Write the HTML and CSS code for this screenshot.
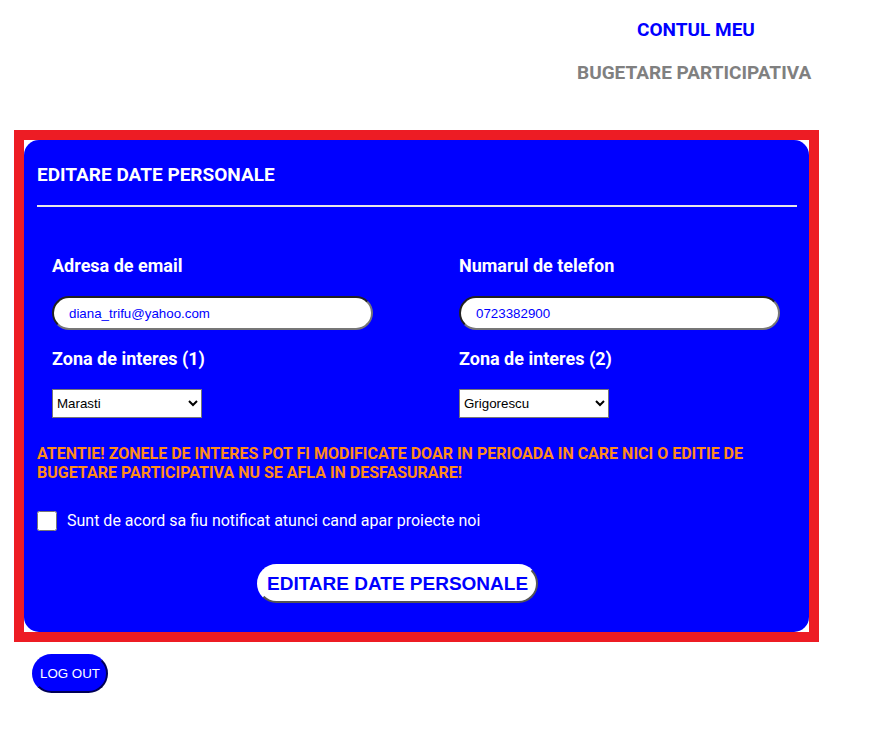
FILE: index.html
```html
<!DOCTYPE html>
<html>
<head>
    <title>Contul meu</title>
    <link rel="stylesheet" href="styles.css">
</head>
<body>
    <ul class="nav">
        <li><a href="#" class="nav-active">CONTUL MEU</a></li>
        <li><a href="#" class="nav-link">BUGETARE PARTICIPATIVA</a></li>
    </ul>

    <div class="frame">
        <div class="panel">
            <h3 class="panel-title">EDITARE DATE PERSONALE</h3>
            <hr class="divider">

            <div class="fields">
                <div class="field">
                    <label for="email">Adresa de email</label>
                    <input type="text" id="email" class="pill" value="diana_trifu@yahoo.com">
                </div>
                <div class="field">
                    <label for="phone">Numarul de telefon</label>
                    <input type="text" id="phone" class="pill" value="0723382900">
                </div>
                <div class="field">
                    <label for="zona1">Zona de interes (1)</label>
                    <select id="zona1" class="zone">
                        <option>Marasti</option>
                        <option>Grigorescu</option>
                        <option>Manastur</option>
                    </select>
                </div>
                <div class="field">
                    <label for="zona2">Zona de interes (2)</label>
                    <select id="zona2" class="zone">
                        <option>Grigorescu</option>
                        <option>Marasti</option>
                        <option>Manastur</option>
                    </select>
                </div>
            </div>

            <p class="warning">ATENTIE! ZONELE DE INTERES POT FI MODIFICATE DOAR IN PERIOADA IN CARE NICI O EDITIE DE BUGETARE PARTICIPATIVA NU SE AFLA IN DESFASURARE!</p>

            <label class="notify">
                <input type="checkbox" class="check">
                <span>Sunt de acord sa fiu notificat atunci cand apar proiecte noi</span>
            </label>

            <button class="save-btn">EDITARE DATE PERSONALE</button>
        </div>
    </div>

    <button class="logout-btn">LOG OUT</button>
</body>
</html>
```

FILE: styles.css
```css
body {
    margin: 0;
    padding: 0;
    background-color: #fff;
    font-family: Roboto, "Liberation Sans", Arial, sans-serif;
}

.nav {
    list-style: none;
    margin: 0 67px 0 auto;
    padding: 19px 0 0 0;
    width: 233px;
    text-align: center;
    white-space: nowrap;
}

.nav li {
    font-size: 19px;
    line-height: 22px;
    margin-bottom: 21px;
}

.nav li:last-child {
    margin-bottom: 0;
}

.nav a {
    font-weight: bold;
    text-decoration: none;
}

.nav-active {
    color: #0000ff;
    padding-left: 5px;
}

.nav-link {
    color: #808080;
}

.frame {
    margin: 46px 0 0 14px;
    width: 785px;
    border: 10px solid #ed1c24;
    background-color: #fff;
}

.panel {
    background-color: #0000ff;
    border-radius: 15px;
    padding: 23px 12px 29px 13px;
    color: #fff;
}

.panel-title {
    margin: 0;
    font-size: 19px;
    line-height: 24px;
    font-weight: bold;
}

.divider {
    margin: 18px 0 0 0;
    border: none;
    border-top: 2px solid #e8e8e8;
    height: 0;
}

.fields {
    display: grid;
    grid-template-columns: 407px 1fr;
    row-gap: 18px;
    padding: 48px 0 0 15px;
}

.field label {
    display: block;
    font-size: 18px;
    font-weight: bold;
    line-height: 22px;
    margin-bottom: 19px;
}

.pill {
    width: 321px;
    height: 34px;
    box-sizing: border-box;
    border: 2px inset #767676;
    border-radius: 17px;
    padding: 0 15px;
    font-family: Arial, "Liberation Sans", sans-serif;
    font-size: 13.33px;
    color: #0000ff;
    background-color: #fff;
    outline: none;
}

.zone {
    width: 150px;
    height: 29px;
    font-family: Arial, "Liberation Sans", sans-serif;
    font-size: 13.33px;
    color: #000;
    border: 1px solid #767676;
    background-color: #fff;
    display: block;
}

.warning {
    margin: 26px 0 0 0;
    color: #ff8c1a;
    font-size: 16px;
    font-weight: bold;
    line-height: 19px;
}

.notify {
    display: flex;
    align-items: center;
    gap: 10px;
    margin-top: 29px;
    font-size: 16px;
    line-height: 20px;
}

.check {
    width: 20px;
    height: 20px;
    margin: 0;
}

.save-btn {
    display: block;
    margin: 33px 0 0 220px;
    height: 39px;
    padding: 0 8px;
    background-color: #fff;
    color: #0000ff;
    font-family: Arial, "Liberation Sans", sans-serif;
    font-size: 19px;
    font-weight: bold;
    border: 2px outset #aaa;
    border-top-color: #fff;
    border-left-color: #fff;
    border-radius: 20px;
    cursor: pointer;
}

.logout-btn {
    margin: 12px 0 0 32px;
    height: 39px;
    padding: 0 6px;
    white-space: nowrap;
    background-color: #0000ff;
    color: #fff;
    font-family: Arial, "Liberation Sans", sans-serif;
    font-size: 13.33px;
    border: 2px outset #0000aa;
    border-top-color: #0000ff;
    border-left-color: #0000ff;
    border-radius: 20px;
    cursor: pointer;
}
```
